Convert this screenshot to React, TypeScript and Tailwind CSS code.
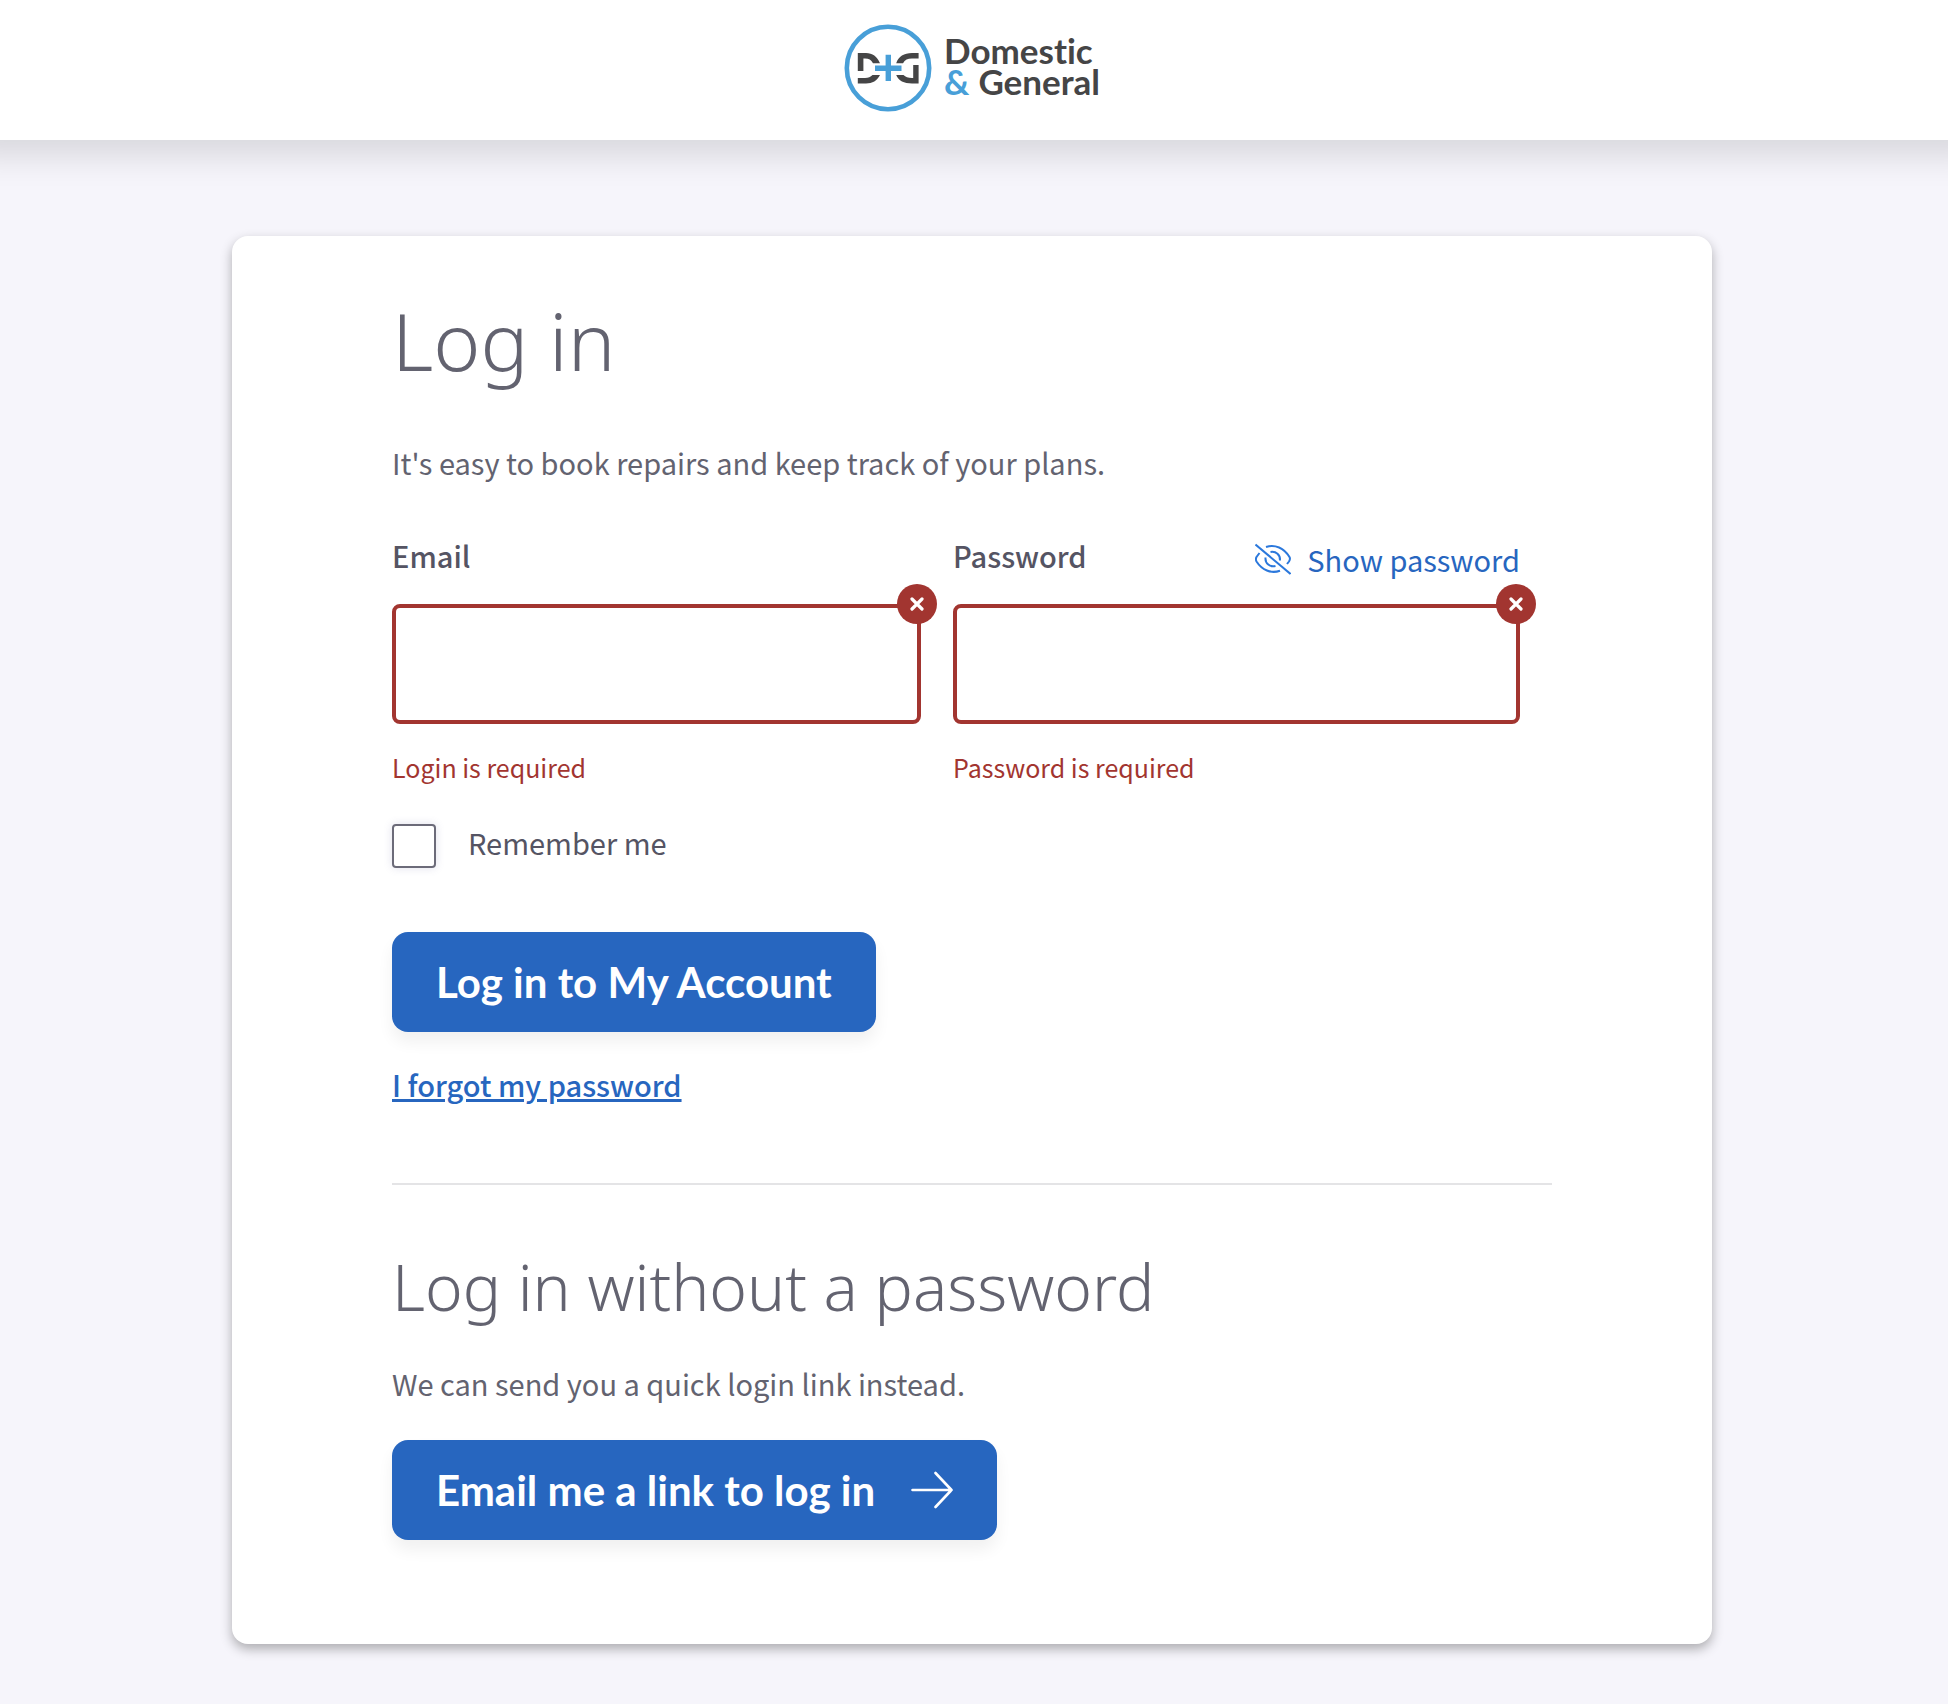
import type { InputHTMLAttributes, ReactNode } from "react";

function LogoMark() {
  return (
    <svg viewBox="0 0 88 88" className="h-[88px] w-[88px]" fill="none" aria-hidden="true">
      <circle cx="44" cy="44" r="41.2" stroke="#489fd8" strokeWidth="4.6" />
      <g fill="#454546">
        <path d="M13.800 29H22C28.500 29 33 32.500 36 39.200H29C27 36 25 34.600 21 34.600H19.400V47H13.800Z" />
        <path d="M13.800 59.400H22C28.500 59.400 33 57 36 51H28.500C26.500 53 24.500 54 21 54H13.800Z" />
        <path d="M74.600 29H68C60 29 54.500 32.500 52.200 39.200H59C61 36 63.500 34.600 68 34.600H74.600Z" />
        <path d="M74.600 41H69.200V54H68C64 54 61.500 53 59.500 51H52.200C54.500 57 60 59.400 68 59.400H74.600Z" />
      </g>
      <path d="M44.300 30.700V57M31 44.200H57.500" stroke="#489fd8" strokeWidth="5.400" />
    </svg>
  );
}

function EyeOffIcon() {
  return (
    <svg viewBox="0 0 36 32" className="h-8 w-9" fill="none" stroke="#2b78dc" strokeWidth="2" aria-hidden="true">
      <path d="M0.500 1.500L35.500 31" />
      <path d="M11 4C20 1 29 5 34.500 14C35.300 15.500 35 17 34 18.500L32 21" />
      <path d="M25 27.700C16 31 7 27 1.500 18.500C0.700 17 0.700 15.500 1.500 14L4.500 10" />
      <path d="M15.500 9C21 8 25.500 12 25 17.500" />
      <path d="M20.500 23C15 24.500 10 20.500 10.500 14.500" />
    </svg>
  );
}

function ErrorBadge() {
  return (
    <span className="absolute -top-5 -right-4 flex size-10 items-center justify-center rounded-full bg-[#a23530]">
      <svg viewBox="0 0 14 14" className="size-3.5" fill="none" stroke="#fff" strokeWidth="3.2" strokeLinecap="round" aria-hidden="true">
        <path d="M2 2L12 12M12 2L2 12" />
      </svg>
    </span>
  );
}

function ArrowIcon() {
  return (
    <svg viewBox="0 0 42 40" className="h-10 w-[42px]" fill="none" stroke="#fff" strokeWidth="2.600" strokeLinecap="round" strokeLinejoin="round" aria-hidden="true">
      <path d="M1.500 20H40.500M24.500 3L40.500 20L24.500 37" />
    </svg>
  );
}

function Field({ id, label, error, action, ...input }: { id: string; label: string; error: string; action?: ReactNode } & InputHTMLAttributes<HTMLInputElement>) {
  return (
    <div>
      <div className="flex h-14 items-start justify-between">
        <label htmlFor={id} className="leading-[46px] font-medium text-[#555463]">{label}</label>
        {action}
      </div>
      <div className="relative mt-4">
        <input
          id={id}
          aria-invalid="true"
          aria-describedby={id + "-error"}
          className="block h-[120px] w-full rounded-lg border-4 border-[#a23530] bg-white px-6 outline-none"
          {...input}
        />
        <ErrorBadge />
      </div>
      <p id={id + "-error"} className="mt-[23px] text-[25px] leading-10 text-[#a23530]">{error}</p>
    </div>
  );
}

const buttonClass =
  "flex h-[100px] items-center gap-9 rounded-2xl bg-[#2766bf] px-11 font-['Lato',sans-serif] text-[42px] font-bold whitespace-nowrap text-white shadow-[0_10px_16px_rgba(0,0,0,0.06)]";
const headingClass = "font-['Noto_Sans',sans-serif] font-light text-[#636370]";

export default function App() {
  return (
    <div className="min-h-screen overflow-x-hidden bg-[#f6f5fb] font-['Noto_Sans_CJK_SC',sans-serif] text-[29px] text-[#636370]">
      <header className="flex h-[140px] justify-center bg-white pt-6 pr-1 shadow-[0_-16px_32px_32px_rgba(0,0,0,0.12)]">
        <a href="#" className="flex h-[88px] items-center gap-3">
          <LogoMark />
          <span className="min-w-[156px] pb-1 font-['Lato',sans-serif] text-[35px] leading-[31px] font-bold text-[#454546] [font-variant-ligatures:none]">
            <span className="block">Domestic</span>
            <span className="flex justify-between">
              <span className="text-[#489fd8]">&amp;</span>
              <span>General</span>
            </span>
          </span>
        </a>
      </header>

      <main className="px-4 pt-24 pr-5 pb-[60px]">
        <div className="mx-auto max-w-[1480px] rounded-2xl bg-white px-40 pt-14 pb-[104px] shadow-[0_5px_12px_rgba(0,0,0,0.3)]">
          <h1 className={`${headingClass} text-[80px] leading-[96px]`}>Log in</h1>
          <p className="mt-[50px] leading-12">It's easy to book repairs and keep track of your plans.</p>

          <form noValidate onSubmit={(e) => e.preventDefault()}>
            <div className="mt-[46px] grid grid-cols-[14fr_15fr] gap-8 pr-8">
              <Field id="email" label="Email" type="email" error="Login is required" />
              <Field
                id="password"
                label="Password"
                type="password"
                error="Password is required"
                action={
                  <button type="button" className="flex items-center gap-4 leading-[54px] text-[#2766bf]">
                    <EyeOffIcon />
                    Show password
                  </button>
                }
              />
            </div>

            <div className="mt-[37px] flex items-start gap-8">
              <input
                id="remember"
                type="checkbox"
                className="size-11 appearance-none rounded-sm border-2 border-[#6c6b79] bg-white shadow-[0_0_8px_rgba(99,99,160,0.2)] checked:bg-[#2766bf]"
              />
              <label htmlFor="remember" className="leading-9 text-[#555463]">Remember me</label>
            </div>

            <button type="submit" className={`${buttonClass} mt-16`}>Log in to My Account</button>
          </form>

          <a href="#" className="mt-7 inline-block leading-12 font-medium text-[#2766bf] underline decoration-3">I forgot my password</a>

          <hr className="mt-[75px] border-t-2 border-[#e4e4e6]" />

          <h2 className={`${headingClass} mt-[62px] text-[64px] leading-20`}>Log in without a password</h2>
          <p className="mt-8 leading-12">We can send you a quick login link instead.</p>
          <button type="button" className={`${buttonClass} mt-[33px]`}>
            Email me a link to log in
            <ArrowIcon />
          </button>
        </div>
      </main>
    </div>
  );
}
